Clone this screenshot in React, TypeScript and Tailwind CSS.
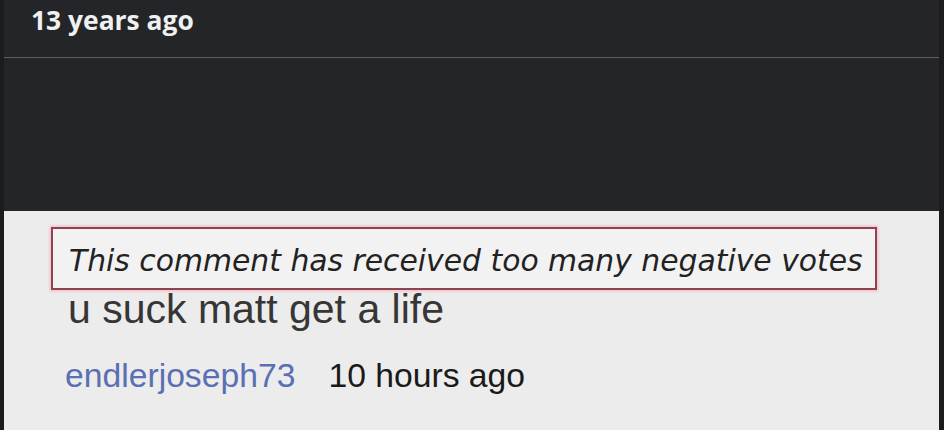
export default function App() {
  return (
    <div className="w-[944px] h-[430px] overflow-hidden bg-[#1c1c1e] flex">
      <div className="ml-[4px] w-[935px] h-[430px] bg-[#242528] flex flex-col">
        <div className="h-[57px] pl-[27px] pt-[1px]">
          <span
            className="text-[26.4px] font-bold text-[#f0f0f0] leading-[38px]"
            style={{ fontFamily: '"Open Sans", "Noto Sans", sans-serif' }}
          >
            13 years ago
          </span>
        </div>
        <div className="h-[1px] bg-[#5e5e60]" />
        <div className="h-[153px]" />
        <div className="flex-1 bg-[#ececec] pl-[47px] pt-[16px]">
          <div className="w-[826px] h-[63px] border-2 border-[#8e4450] bg-[#f3f2f2] shadow-[0_0_3px_1px_#f4b6c0] flex items-center pl-[16px] pt-[4px]">
            <span
              className="italic text-[29.8px] text-[#222] leading-none"
              style={{ fontFamily: '"DejaVu Sans", Verdana, sans-serif' }}
            >
              This comment has received too many negative votes
            </span>
          </div>
          <div
            className="pl-[17px] text-[41px] text-[#363636] leading-[40px] mt-[-1px]"
            style={{ fontFamily: '"Liberation Sans", Arial, sans-serif' }}
          >
            u suck matt get a life
          </div>
          <div
            className="pl-[14px] mt-[28px] flex gap-[33px] text-[33.7px] leading-[36px]"
            style={{ fontFamily: '"Liberation Sans", Arial, sans-serif' }}
          >
            <span className="text-[#5b6fb3]">endlerjoseph73</span>
            <span className="text-[#1a1a1a]">10 hours ago</span>
          </div>
        </div>
      </div>
    </div>
  );
}
